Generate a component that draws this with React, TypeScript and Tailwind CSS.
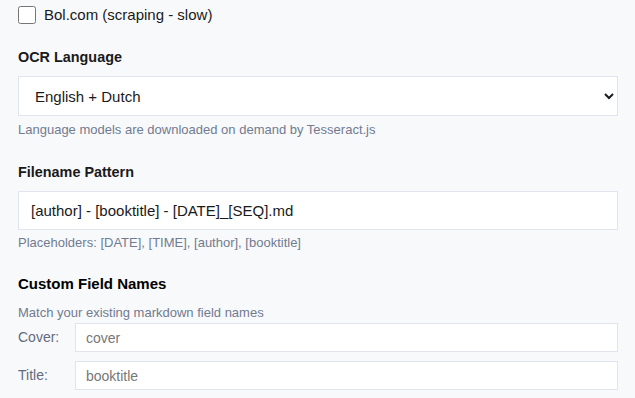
import { useState } from 'react';

const font = { fontFamily: '"Liberation Sans", Arial, sans-serif' };

export default function App() {
  const [bol, setBol] = useState(false);
  const [lang, setLang] = useState('eng+nld');
  const [pattern, setPattern] = useState('[author] - [booktitle] - [DATE]_[SEQ].md');
  const [cover, setCover] = useState('cover');
  const [title, setTitle] = useState('booktitle');

  return (
    <div style={font} className="min-h-[398px] w-[635px] bg-[#f8f9fb] pl-[18px] pr-[17px] pt-[6px] text-[#1a1a1a]">
      {/* Source toggle */}
      <label className="flex h-[18px] items-center gap-2 text-[15px]">
        <input
          type="checkbox"
          checked={bol}
          onChange={(e) => setBol(e.target.checked)}
          className="m-0 h-[18px] w-[18px]"
        />
        <span>Bol.com (scraping - slow)</span>
      </label>

      {/* OCR language */}
      <div className="mt-6">
        <div className="text-[14.4px] font-bold leading-[19px]">OCR Language</div>
        <select
          value={lang}
          onChange={(e) => setLang(e.target.value)}
          className="mt-[9px] block h-10 w-full border border-[#e1e4ee] bg-white px-3 text-[15px] text-[#1a1a1a]"
        >
          <option value="eng">English</option>
          <option value="nld">Dutch</option>
          <option value="eng+nld">English + Dutch</option>
        </select>
        <p className="mt-[6px] text-[13px] leading-4 text-[#727b90]">
          Language models are downloaded on demand by Tesseract.js
        </p>
      </div>

      {/* Filename pattern */}
      <div className="mt-[25px]">
        <div className="text-[14.4px] font-bold leading-[19px]">Filename Pattern</div>
        <input
          type="text"
          value={pattern}
          onChange={(e) => setPattern(e.target.value)}
          className="mt-[9px] block h-[39px] w-full border border-[#e1e4ee] bg-white px-3 text-[15px] text-[#1a1a1a] outline-none"
        />
        <p className="mt-[5px] text-[13px] leading-4 text-[#727b90]">
          Placeholders: [DATE], [TIME], [author], [booktitle]
        </p>
      </div>

      {/* Custom field names */}
      <div className="mt-[23px]">
        <div className="text-[15px] font-bold leading-[19px] text-black">Custom Field Names</div>
        <p className="mt-3 text-[13px] leading-4 text-[#727b90]">Match your existing markdown field names</p>
        <div className="mt-[2px] flex flex-col gap-[9px]">
          <div className="flex items-center">
            <span className="w-[57px] text-[14px] text-[#646b7d]">Cover:</span>
            <input
              type="text"
              value={cover}
              onChange={(e) => setCover(e.target.value)}
              className="h-[29px] flex-1 border border-[#e1e4ee] bg-white px-[10px] text-[14px] text-[#777] outline-none"
            />
          </div>
          <div className="flex items-center">
            <span className="w-[57px] text-[14px] text-[#646b7d]">Title:</span>
            <input
              type="text"
              value={title}
              onChange={(e) => setTitle(e.target.value)}
              className="h-[29px] flex-1 border border-[#e1e4ee] bg-white px-[10px] text-[14px] text-[#777] outline-none"
            />
          </div>
        </div>
      </div>
    </div>
  );
}
